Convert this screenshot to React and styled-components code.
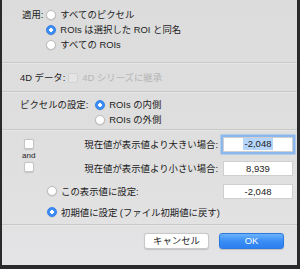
import React from 'react';
import styled, { createGlobalStyle } from 'styled-components';

const GlobalStyle = createGlobalStyle`
  html, body {
    margin: 0;
    padding: 0;
    background: #2a2a2c;
  }
  body {
    width: 300px;
    height: 269px;
    overflow: hidden;
    font-family: "Liberation Sans", "Noto Sans CJK JP", sans-serif;
  }
`;

function Radio(props) {
  return <RadioDot checked={props.checked} />;
}

function App() {
  return (
    <>
      <GlobalStyle />
      <Frame>
        <Sheet>
          <ApplySection>
            <FieldLabel>適用:</FieldLabel>
            <Options>
              <OptionRow><Radio /><span>すべてのピクセル</span></OptionRow>
              <OptionRow><Radio checked /><span>ROIs は選択した ROI と同名</span></OptionRow>
              <OptionRow><Radio /><span>すべての ROIs</span></OptionRow>
            </Options>
          </ApplySection>
          <Separator />
          <FourDSection>
            <FieldLabel>4D データ:</FieldLabel>
            <OptionRow disabled>
              <Checkbox disabled />
              <span>4D シリーズに継承</span>
            </OptionRow>
          </FourDSection>
          <Separator />
          <PixelSection>
            <FieldLabel>ピクセルの設定:</FieldLabel>
            <Options>
              <OptionRow><Radio checked /><span>ROIs の内側</span></OptionRow>
              <OptionRow><Radio /><span>ROIs の外側</span></OptionRow>
            </Options>
          </PixelSection>
          <Separator />
          <ValueSection>
            <AndColumn>
              <Checkbox />
              <AndText>and</AndText>
              <Checkbox />
            </AndColumn>
            <CondLabel row={1}>現在値が表示値より大きい場合:</CondLabel>
            <InputCell row={1}>
              <ValueInput focused>
                <Selected>-2,048</Selected>
              </ValueInput>
            </InputCell>
            <CondLabel row={2}>現在値が表示値より小さい場合:</CondLabel>
            <InputCell row={2}>
              <ValueInput>8,939</ValueInput>
            </InputCell>
            <RadioLine row={3}><Radio /><span>この表示値に設定:</span></RadioLine>
            <InputCell row={3}>
              <ValueInput>-2,048</ValueInput>
            </InputCell>
            <RadioLine row={4} wide>
              <Radio checked /><span>初期値に設定 (ファイル初期値に戻す)</span>
            </RadioLine>
          </ValueSection>
          <Separator />
          <ButtonBar>
            <Button>キャンセル</Button>
            <Button primary>OK</Button>
          </ButtonBar>
        </Sheet>
      </Frame>
    </>
  );
}

export default App

const Frame = styled.div`
  width: 300px;
  height: 269px;
  padding: 0 3px 4px 2px;
  box-sizing: border-box;
  display: flex;
`

const Sheet = styled.div`
  flex: 1;
  display: flex;
  flex-direction: column;
  background: linear-gradient(180deg, #dcdcdc 0%, #dfdfdf 60%, #e4e4e6 100%);
  color: #222;
  font-size: 9.4px;
  line-height: 15px;
`

const Separator = styled.div`
  flex: none;
  height: 1px;
  background: #c9c9c9;
  border-bottom: 1px solid #e6e6e6;
`

const ApplySection = styled.div`
  display: flex;
  align-items: flex-start;
  gap: 3px;
  height: 62px;
  box-sizing: border-box;
  padding: 7px 0 0 20px;
`

const FourDSection = styled.div`
  display: flex;
  align-items: center;
  gap: 3px;
  height: 27px;
  box-sizing: border-box;
  padding: 0 0 0 18px;
`

const PixelSection = styled.div`
  display: flex;
  align-items: flex-start;
  gap: 7px;
  height: 36px;
  box-sizing: border-box;
  padding: 4px 0 0 18px;
`

const FieldLabel = styled.div`
  white-space: nowrap;
  line-height: 15px;
`

const Options = styled.div`
  display: flex;
  flex-direction: column;
`

const OptionRow = styled.div`
  display: flex;
  align-items: center;
  gap: 4px;
  height: 15px;
  white-space: nowrap;
  color: ${p => (p.disabled ? '#b6b6b6' : 'inherit')};
`

const RadioDot = styled.span`
  width: 10px;
  height: 10px;
  border-radius: 50%;
  box-sizing: border-box;
  flex: none;
  background: ${p => (p.checked ? 'radial-gradient(circle, #fff 0 1.6px, #3c8ef5 2px)' : '#fff')};
  border: ${p => (p.checked ? '0.5px solid #2f7de6' : '0.5px solid #bdbdbd')};
  box-shadow: 0 0.5px 1px rgba(0, 0, 0, 0.15);
`

const Checkbox = styled.span`
  width: 10px;
  height: 10px;
  border-radius: 2px;
  box-sizing: border-box;
  flex: none;
  background: ${p => (p.disabled ? '#e4e4e4' : '#fff')};
  border: 0.5px solid ${p => (p.disabled ? '#d2d2d2' : '#c4c4c4')};
  box-shadow: ${p => (p.disabled ? 'none' : '0 0.5px 1px rgba(0, 0, 0, 0.12)')};
`

const ValueSection = styled.div`
  display: grid;
  grid-template-columns: 26px 1fr 70px;
  grid-template-rows: 24px 24px 22px 20px;
  align-items: center;
  height: 93px;
  box-sizing: border-box;
  padding: 1px 4px 0 22px;
`

const AndColumn = styled.div`
  grid-column: 1;
  grid-row: 1 / 3;
  align-self: start;
  display: flex;
  flex-direction: column;
  align-items: flex-start;
  padding-top: 7px;
`

const AndText = styled.span`
  font-size: 8px;
  line-height: 13px;
  margin-left: -2px;
`

const CondLabel = styled.div`
  grid-column: 2;
  grid-row: ${p => p.row};
  text-align: right;
  padding-right: 5px;
  white-space: nowrap;
`

const InputCell = styled.div`
  grid-column: 3;
  grid-row: ${p => p.row};
  display: flex;
`

const ValueInput = styled.div`
  flex: 1;
  height: 15px;
  box-sizing: border-box;
  background: #fff;
  display: flex;
  align-items: center;
  justify-content: center;
  font-size: 9.5px;
  border: 0.5px solid #cfcfcf;
  box-shadow: ${p => (p.focused ? '0 0 0 2.5px #8ab8ee' : 'none')};
`

const Selected = styled.span`
  background: #b5d5fb;
  padding: 0 2px;
  line-height: 12px;
`

const RadioLine = styled.div`
  grid-column: 1 / ${p => (p.wide ? 4 : 3)};
  grid-row: ${p => p.row};
  display: flex;
  align-items: center;
  gap: 4px;
  padding-left: 23px;
  white-space: nowrap;
`

const ButtonBar = styled.div`
  display: flex;
  justify-content: flex-end;
  gap: 10px;
  padding: 7px 13px 0 0;
`

const Button = styled.button`
  width: 65px;
  height: 16px;
  padding: 0;
  border-radius: 3px;
  font-family: "Liberation Sans", "Noto Sans CJK JP", sans-serif;
  font-size: 9.4px;
  line-height: 14px;
  color: ${p => (p.primary ? '#fff' : '#222')};
  background: ${p => (p.primary ? 'linear-gradient(180deg, #6cb3fa 0%, #3a8ef5 50%, #2d7ff0 100%)' : '#fff')};
  border: 0.5px solid ${p => (p.primary ? '#2a78e0' : '#c8c8c8')};
  box-shadow: 0 0.5px 1px rgba(0, 0, 0, 0.15);
`
